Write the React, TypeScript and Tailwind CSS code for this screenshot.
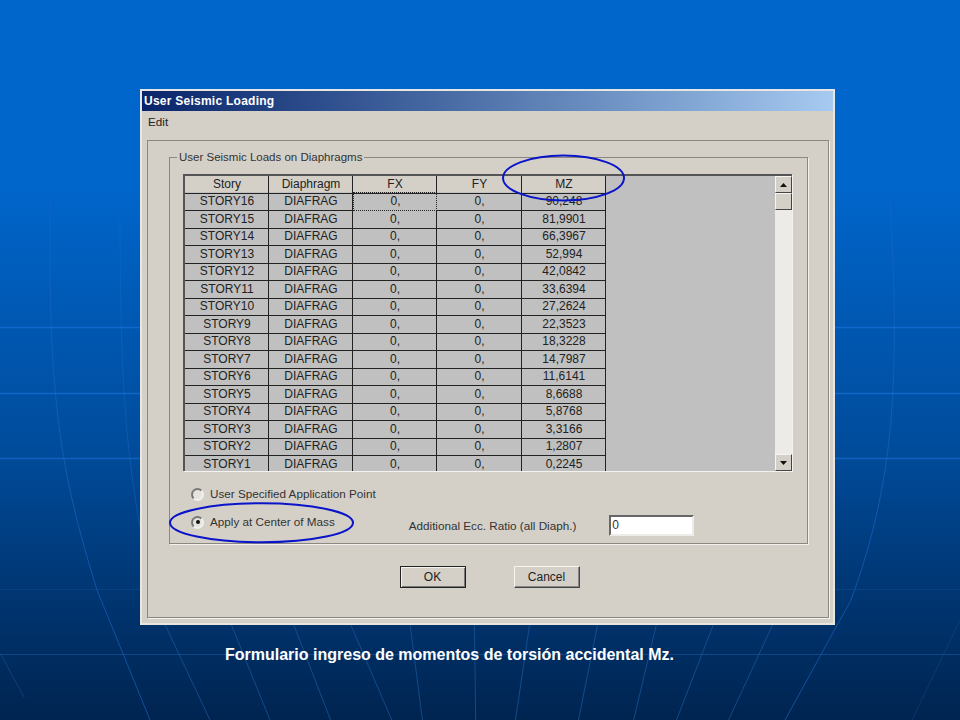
const rows = [
  ['STORY16', '90,248'],
  ['STORY15', '81,9901'],
  ['STORY14', '66,3967'],
  ['STORY13', '52,994'],
  ['STORY12', '42,0842'],
  ['STORY11', '33,6394'],
  ['STORY10', '27,2624'],
  ['STORY9', '22,3523'],
  ['STORY8', '18,3228'],
  ['STORY7', '14,7987'],
  ['STORY6', '11,6141'],
  ['STORY5', '8,6688'],
  ['STORY4', '5,8768'],
  ['STORY3', '3,3166'],
  ['STORY2', '1,2807'],
  ['STORY1', '0,2245'],
]

const cols = 'grid grid-cols-[84px_84px_84px_85px_84px]'

function Radio({ checked }: { checked?: boolean }) {
  return (
    <span className="flex h-[13px] w-[13px] shrink-0 items-center justify-center rounded-full border-2 border-t-[#777] border-l-[#777] border-r-[#f2f0ec] border-b-[#f2f0ec] bg-[#e6e4df]">
      {checked && <span className="h-[4px] w-[4px] rounded-full bg-[#111]" />}
    </span>
  )
}

function DialogButton({ label, primary }: { label: string; primary?: boolean }) {
  return (
    <button
      className={
        primary
          ? 'flex h-[22px] w-[66px] items-center justify-center border border-[#222] bg-[#d4d0c8] text-[12px] text-[#222] shadow-[inset_1px_1px_0_#f5f4f0,inset_-1px_-1px_0_#777]'
          : 'flex h-[22px] w-[66px] items-center justify-center border border-t-[#f5f4f0] border-l-[#f5f4f0] border-r-[#444] border-b-[#444] bg-[#d4d0c8] text-[12px] text-[#222] shadow-[inset_-1px_-1px_0_#888]'
      }
    >
      {label}
    </button>
  )
}

function Background() {
  const spokes: [number, number][] = [
    [270, 343], [378, 441], [480, 540], [573, 640], [670, 690], [775, 777],
    [865, 842], [976, 945], [1072, 1035], [1165, 1105], [1262, 1190],
  ]
  return (
    <svg className="absolute inset-0 h-full w-full" viewBox="0 0 960 720" fill="none">
      {spokes.map(([top, bottom], i) => (
        <line key={i} x1={top * 0.6122} y1="625" x2={bottom * 0.6122} y2="720" stroke="#1a5aa0" strokeOpacity="0.7" />
      ))}
      <path d="M50 200C48 400 60 470 97 590L150 720" stroke="#1a66c0" strokeOpacity="0.65" />
      <path d="M120 200C120 400 125 470 160 625" stroke="#1a66c0" strokeOpacity="0.5" />
      <path d="M890 200C900 380 895 480 851 600L785 720" stroke="#1a66c0" strokeOpacity="0.65" />
      <path d="M960 620L912 720" stroke="#1a5aa0" strokeOpacity="0.35" />
      <path d="M0 653L24 697" stroke="#1a5aa0" strokeOpacity="0.5" />
      <line x1="0" y1="327.5" x2="960" y2="327.5" stroke="#1a70d8" strokeOpacity="0.7" strokeWidth="1.5" />
      <line x1="0" y1="393.5" x2="960" y2="393.5" stroke="#1a70d8" strokeOpacity="0.7" strokeWidth="1.5" />
      <line x1="0" y1="458.5" x2="960" y2="458.5" stroke="#1a70d8" strokeOpacity="0.6" strokeWidth="1.5" />
      <line x1="0" y1="589.5" x2="960" y2="589.5" stroke="#1a5aa0" strokeOpacity="0.35" />
      <line x1="0" y1="654.5" x2="960" y2="654.5" stroke="#1a5aa0" strokeOpacity="0.6" />
    </svg>
  )
}

export default function App() {
  return (
    <div
      className="relative h-[720px] w-[960px] overflow-hidden bg-gradient-to-b from-[#0066cc] from-[25%] via-[#004c9c] via-[62%] to-[#002450] pt-[89px] pl-[140px]"
      style={{ fontFamily: '"Liberation Sans", Arial, sans-serif' }}
    >
      <Background />

      <div className="relative flex h-[536px] w-[695px] flex-col border-2 border-[#e8e6e2] bg-[#d4d0c8]">
        <div className="flex h-[20px] items-center bg-gradient-to-r from-[#0a246a] to-[#a6caf0] pl-[2px] text-[12px] font-bold tracking-[0.25px] text-white">
          User Seismic Loading
        </div>
        <div className="flex h-[21px] items-center pl-[6px] text-[11.7px] text-[#222]">Edit</div>

        <div className="mt-[8px] mr-[4px] mb-[5px] ml-[5px] flex-1 border border-[#8a8880] pt-[16px] pl-[21px] shadow-[1px_1px_0_#f4f2ee]">
          <div className="relative h-[387px] w-[639px] border border-[#8a8880] pt-[16px] pl-[13px] shadow-[1px_1px_0_#f4f2ee]">
            <span className="absolute -top-[8px] left-[7px] bg-[#d4d0c8] px-[2px] text-[11.5px] leading-[14px] text-[#333]">
              User Seismic Loads on Diaphragms
            </span>

            <div className="flex h-[297px] w-[609px] overflow-hidden border-t-2 border-l-2 border-t-[#555] border-l-[#555] bg-[#c0c0c0] shadow-[1px_1px_0_#f4f2ee]">
              <div className="w-[421px] shrink-0">
                <div className={`${cols} h-[16px] bg-[#d4d0c8] text-center text-[12px] leading-[17px] text-[#222]`}>
                  {['Story', 'Diaphragm', 'FX', 'FY', 'MZ'].map((h) => (
                    <div key={h} className="border-r border-b border-[#222] pl-[1px]">{h}</div>
                  ))}
                </div>
                {rows.map(([story, mz], i) => (
                  <div key={story} className={`${cols} h-[17.5px] bg-[#c0c0c0] text-center text-[12px] leading-[18px] text-[#222]`}>
                    <div className="border-r border-b border-[#222] pl-[1px]">{story}</div>
                    <div className="border-r border-b border-[#222] pl-[1px]">DIAFRAG</div>
                    <div className={i === 0 ? 'border border-dotted border-[#222] pl-[1px] leading-[16px]' : 'border-r border-b border-[#222] pl-[1px]'}>0,</div>
                    <div className="border-r border-b border-[#222] pl-[1px]">0,</div>
                    <div className="border-r border-b border-[#222] pl-[1px]">{mz}</div>
                  </div>
                ))}
              </div>
              <div className="flex-1" />
              <div className="flex w-[17px] shrink-0 flex-col bg-[#ecebe7]">
                <div className="flex h-[17px] items-center justify-center border border-t-[#f5f4f0] border-l-[#f5f4f0] border-r-[#444] border-b-[#444] bg-[#d4d0c8]">
                  <svg width="7" height="4" viewBox="0 0 7 4"><path d="M3.5 0L7 4H0z" fill="#111" /></svg>
                </div>
                <div className="h-[17px] border border-t-[#f5f4f0] border-l-[#f5f4f0] border-r-[#444] border-b-[#444] bg-[#d4d0c8]" />
                <div className="flex-1" />
                <div className="flex h-[17px] items-center justify-center border border-t-[#f5f4f0] border-l-[#f5f4f0] border-r-[#444] border-b-[#444] bg-[#d4d0c8]">
                  <svg width="7" height="4" viewBox="0 0 7 4"><path d="M0 0H7L3.5 4z" fill="#111" /></svg>
                </div>
              </div>
            </div>

            <div className="mt-[16px] flex h-[14px] items-center gap-[6px] pl-[8px] text-[11.7px] leading-[14px] text-[#333]">
              <Radio />
              User Specified Application Point
            </div>
            <div className="mt-[14px] flex h-[14px] items-center pl-[8px] text-[11.7px] leading-[14px] text-[#333]">
              <Radio checked />
              <span className="ml-[6px]">Apply at Center of Mass</span>
              <span className="mt-[8px] ml-[74px]">Additional Ecc. Ratio (all Diaph.)</span>
              <span className="mt-[6px] ml-[33px] flex h-[21px] w-[85px] shrink-0 items-center border-2 border-t-[#666] border-l-[#666] border-r-[#eeece8] border-b-[#eeece8] bg-white pl-[1px] text-[12px]">
                0
              </span>
            </div>
          </div>

          <div className="mt-[22px] flex w-[639px] justify-center gap-[48px] pl-[2px]">
            <DialogButton label="OK" primary />
            <DialogButton label="Cancel" />
          </div>
        </div>

        {/* blue markers drawn over the dialog */}
        <svg className="absolute -top-[2px] -left-[2px] h-[536px] w-[695px]" viewBox="0 0 695 536" fill="none">
          <ellipse cx="423.5" cy="89" rx="60.5" ry="22.5" stroke="#0a14c8" strokeWidth="2" />
          <ellipse cx="121.5" cy="433.7" rx="91.5" ry="19.5" stroke="#0a14c8" strokeWidth="2" />
        </svg>
      </div>

      <p className="relative mt-[21px] ml-[85px] text-[16px] leading-[18px] font-bold text-white">
        Formulario ingreso de momentos de torsión accidental Mz.
      </p>
    </div>
  )
}
